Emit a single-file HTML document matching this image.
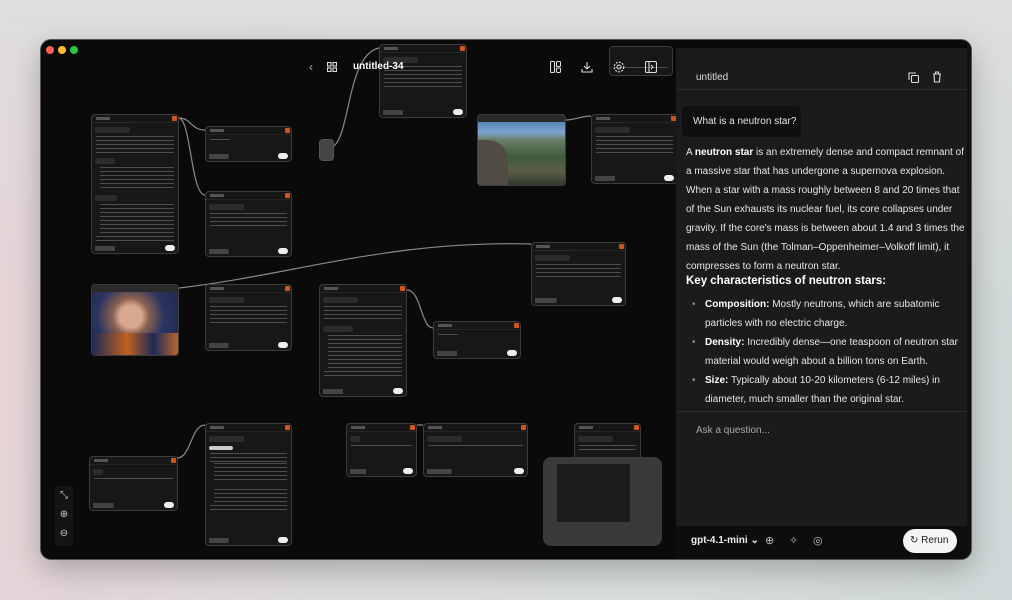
<!DOCTYPE html>
<html><head><meta charset="utf-8"><style>
*{box-sizing:border-box;margin:0;padding:0}
body{width:1012px;height:600px;overflow:hidden;font-family:"Liberation Sans",sans-serif;background:linear-gradient(100deg,#e8d2d6 0%,#dcdcdc 40%,#d8dcdc 70%,#cfd8d8 100%);position:relative}
.bgtop{position:absolute;left:0;top:0;width:1012px;height:300px;background:linear-gradient(#dedede,rgba(222,222,222,0))}
.win{position:absolute;left:40px;top:39px;width:932px;height:521px;border-radius:11px;background:#0a0a0a;overflow:hidden;box-shadow:0 10px 30px rgba(0,0,0,.25);border:1px solid #555}
.dot{position:absolute;top:6px;width:8px;height:8px;border-radius:50%}
.n{position:absolute;background:#171717;border:1px solid #3c3c3c;border-radius:4px;overflow:hidden}
.n .h{height:8px;border-bottom:1px solid #262626;position:relative}
.n .h:after{content:"";position:absolute;right:1px;top:1px;width:5px;height:5px;background:#d2551c;border-radius:1px}
.n .h:before{content:"";position:absolute;left:4px;top:2px;width:14px;height:3px;background:#555}
.q{margin:4px 3px 3px;height:6px;width:35px;background:#2c2c2c;border-radius:2px}
.t{margin:0 4px;background:repeating-linear-gradient(#7a7a7a 0 1px,transparent 1px 4px);opacity:.55}
.f{position:absolute;left:3px;right:3px;bottom:2px;height:5px;background:linear-gradient(90deg,#444 0 25%,transparent 25%)}
.f:after{content:"";position:absolute;right:0;top:-1px;width:10px;height:6px;background:#eee;border-radius:3px}
.img{position:absolute;border-radius:4px;overflow:hidden;border:1px solid #3c3c3c}
.panel{position:absolute;left:635px;top:8px;width:291px;height:478px;background:#1b1b1d}
.txt{position:absolute;left:10px;color:#e6e6e6;font-size:10px;line-height:19px;white-space:nowrap;letter-spacing:0}
b{color:#fff}
.ic{position:absolute}
</style></head><body>
<div class="bgtop"></div>
<div class="win">
 <div class="dot" style="left:5px;background:#fe5f57"></div>
 <div class="dot" style="left:17px;background:#febc2e"></div>
 <div class="dot" style="left:29px;background:#28c840"></div>

 <svg style="position:absolute;left:0;top:0" width="640" height="521" fill="none" stroke="#8a8a8a" stroke-width="1.2">
  <path d="M138 78 C150 78,150 90,164 90"/>
  <path d="M138 78 C150 80,150 155,164 155"/>
  <path d="M290 108 C310 100,305 15,338 8"/>
  <path d="M524 80 C535 80,540 76,550 76"/>
  <path d="M138 248 C250 235,350 200,490 204"/>
  <path d="M366 250 C380 250,380 288,392 288"/>
  <path d="M136 418 C150 418,150 385,164 385"/>
  <path d="M376 385 L382 385"/>
 </svg>

 <div class="n" style="left:50px;top:74px;width:88px;height:140px"><div class="h"></div><div class="q"></div><div class="t" style="height:18px"></div><div class="q" style="width:20px"></div><div class="t" style="height:24px;margin-left:8px"></div><div class="q" style="width:22px"></div><div class="t" style="height:32px;margin-left:8px"></div><div class="t" style="height:8px"></div><div class="f"></div></div>
 <div class="n" style="left:164px;top:86px;width:87px;height:36px"><div class="h"></div><div class="t" style="height:2px;width:20px;margin-top:4px"></div><div class="f"></div></div>
 <div class="n" style="left:164px;top:151px;width:87px;height:66px"><div class="h"></div><div class="q"></div><div class="t" style="height:16px"></div><div class="f"></div></div>
 <div class="n" style="left:338px;top:4px;width:88px;height:74px"><div class="h"></div><div class="q"></div><div class="t" style="height:22px"></div><div class="f"></div></div>
 <div class="img" style="left:436px;top:74px;width:89px;height:72px;background:linear-gradient(#3f6fa6 0%,#7fa6cf 25%,#6b7f6a 35%,#3e5a3a 60%,#5c5e48 80%,#2e3a28 100%)"><div style="position:absolute;left:0;top:0;right:0;height:7px;background:#2a2a2a"></div><div style="position:absolute;left:0;bottom:0;width:30px;height:45px;background:#504c44;border-radius:0 20px 0 0"></div></div>
 <div class="n" style="left:550px;top:74px;width:87px;height:70px"><div class="h"></div><div class="q"></div><div class="t" style="height:18px"></div><div class="f"></div></div>
 <div class="n" style="left:278px;top:99px;width:15px;height:22px;background:#444;border-color:#555"></div>
 <div class="n" style="left:568px;top:6px;width:64px;height:30px"><div class="t" style="height:4px;margin-top:20px"></div></div>
 <div class="img" style="left:50px;top:244px;width:88px;height:72px;background:radial-gradient(circle at 45% 45%,#d8a890 0 18%,#8a6050 30%,#2a3560 55%,#1e2545 100%)"><div style="position:absolute;left:0;top:0;right:0;height:7px;background:#2a2a2a"></div><div style="position:absolute;left:0;bottom:0;width:88px;height:22px;background:linear-gradient(90deg,#1e2a58,#c06020 40%,#1e2a58 70%,#c8682a)"></div></div>
 <div class="n" style="left:164px;top:244px;width:87px;height:67px"><div class="h"></div><div class="q"></div><div class="t" style="height:18px"></div><div class="f"></div></div>
 <div class="n" style="left:278px;top:244px;width:88px;height:113px"><div class="h"></div><div class="q"></div><div class="t" style="height:16px"></div><div class="q" style="width:30px"></div><div class="t" style="height:36px;margin-left:8px"></div><div class="t" style="height:6px"></div><div class="f"></div></div>
 <div class="n" style="left:392px;top:281px;width:88px;height:38px"><div class="h"></div><div class="t" style="height:2px;width:20px;margin-top:4px"></div><div class="f"></div></div>
 <div class="n" style="left:490px;top:202px;width:95px;height:64px"><div class="h"></div><div class="q"></div><div class="t" style="height:14px"></div><div class="f"></div></div>
 <div class="n" style="left:48px;top:416px;width:89px;height:55px"><div class="h"></div><div class="q" style="width:10px"></div><div class="t" style="height:3px"></div><div class="f"></div></div>
 <div class="n" style="left:164px;top:383px;width:87px;height:123px"><div class="h"></div><div class="q"></div><div class="q" style="width:24px;background:#ccc;height:4px"></div><div class="t" style="height:10px"></div><div class="t" style="height:20px;margin-left:8px"></div><div class="t" style="height:16px;margin-left:8px;margin-top:6px"></div><div class="t" style="height:8px"></div><div class="f"></div></div>
 <div class="n" style="left:305px;top:383px;width:71px;height:54px"><div class="h"></div><div class="q" style="width:10px"></div><div class="t" style="height:2px"></div><div class="f"></div></div>
 <div class="n" style="left:382px;top:383px;width:105px;height:54px"><div class="h"></div><div class="q"></div><div class="t" style="height:2px"></div><div class="f"></div></div>
 <div class="n" style="left:533px;top:383px;width:67px;height:50px"><div class="h"></div><div class="q"></div><div class="t" style="height:6px"></div></div>

 <div style="position:absolute;left:502px;top:417px;width:119px;height:89px;background:#3a3a3a;border-radius:8px;overflow:hidden">
  <div style="position:absolute;left:14px;top:7px;width:73px;height:58px;background:#1c1c1c"></div>
 </div>

 <div style="position:absolute;left:14px;top:446px;width:18px;height:60px;background:#141414;border-radius:5px;color:#ccc;font-size:10px;text-align:center;line-height:19px">⤡<br>⊕<br>⊖</div>

 <div style="position:absolute;left:268px;top:20px;color:#aaa;font-size:12px">‹</div>
 <svg class="ic" style="left:286px;top:22px" width="10" height="10" fill="none" stroke="#ddd" stroke-width="1.1"><rect x=".5" y=".5" width="3.5" height="3.5"/><rect x="6" y=".5" width="3.5" height="3.5"/><rect x=".5" y="6" width="3.5" height="3.5"/><rect x="6" y="6" width="3.5" height="3.5"/></svg>
 <div style="position:absolute;left:312px;top:21px;color:#fff;font-size:10px;font-weight:bold">untitled-34</div>
 <svg class="ic" style="left:509px;top:21px" width="11" height="12" fill="none" stroke="#ddd" stroke-width="1.1"><rect x=".5" y=".5" width="4" height="11" rx="1"/><rect x="6.5" y=".5" width="4" height="5" rx="1"/><rect x="6.5" y="7" width="4" height="4.5" rx="1"/></svg>
 <svg class="ic" style="left:540px;top:21px" width="12" height="12" fill="none" stroke="#ddd" stroke-width="1.1"><path d="M6 1v7M3 5l3 3 3-3M1 8v3h10V8"/></svg>
 <svg class="ic" style="left:572px;top:21px" width="12" height="12" fill="none" stroke="#ddd" stroke-width="1.1"><circle cx="6" cy="6" r="2"/><circle cx="6" cy="6" r="4.8" stroke-dasharray="2 1.2"/></svg>
 <svg class="ic" style="left:604px;top:21px" width="12" height="12" fill="none" stroke="#ddd" stroke-width="1.1"><rect x=".5" y=".5" width="11" height="11" rx="1.5"/><path d="M4 1v10M6 4l2 2-2 2"/></svg>

 <div class="panel">
  <div style="position:absolute;left:20px;top:24px;color:#ddd;font-size:10px">untitled</div>
  <svg class="ic" style="left:232px;top:24px" width="11" height="11" fill="none" stroke="#ddd" stroke-width="1.1"><rect x="3.5" y="3.5" width="7" height="7" rx="1"/><path d="M1 8V1h7"/></svg>
  <svg class="ic" style="left:256px;top:23px" width="10" height="12" fill="none" stroke="#ddd" stroke-width="1.1"><path d="M1 3h8M3.5 3V1h3v2M2 3l.5 8h5L8 3"/></svg>
  <div style="position:absolute;left:0;right:0;top:41px;height:1px;background:#2e2e30"></div>
  <div style="position:absolute;left:6px;top:58px;width:119px;height:31px;background:#0f0f10;border-radius:5px;color:#e6e6e6;font-size:10px;line-height:31px;padding-left:11px;white-space:nowrap">What is a neutron star?</div>
  <div class="txt" style="top:95px">A <b>neutron star</b> is an extremely dense and compact remnant of<br>a massive star that has undergone a supernova explosion.<br>When a star with a mass roughly between 8 and 20 times that<br>of the Sun exhausts its nuclear fuel, its core collapses under<br>gravity. If the core's mass is between about 1.4 and 3 times the<br>mass of the Sun (the Tolman–Oppenheimer–Volkoff limit), it<br>compresses to form a neutron star.</div>
  <div class="txt" style="top:224px;font-size:11.5px;font-weight:bold;color:#fff">Key characteristics of neutron stars:</div>
  <div class="txt" style="top:247px;left:16px;color:#888">•<br><br>•<br><br>•</div>
  <div class="txt" style="top:247px;left:29px"><b>Composition:</b> Mostly neutrons, which are subatomic<br>particles with no electric charge.</div>
  <div class="txt" style="top:285px;left:29px"><b>Density:</b> Incredibly dense—one teaspoon of neutron star<br>material would weigh about a billion tons on Earth.</div>
  <div class="txt" style="top:323px;left:29px"><b>Size:</b> Typically about 10-20 kilometers (6-12 miles) in<br>diameter, much smaller than the original star.</div>
  <div style="position:absolute;left:0;right:0;top:363px;height:1px;background:#2e2e30"></div>
  <div style="position:absolute;left:20px;top:377px;color:#aaa;font-size:10px">Ask a question...</div>
 </div>
 <div style="position:absolute;left:635px;top:486px;width:291px;height:35px;background:#0d0d0d"></div>
 <div style="position:absolute;left:650px;top:495px;color:#eee;font-size:10px;font-weight:bold">gpt-4.1-mini ⌄</div>
 <div style="position:absolute;left:724px;top:494px;color:#bbb;font-size:11px">⊕</div>
 <div style="position:absolute;left:748px;top:494px;color:#bbb;font-size:11px">✧</div>
 <div style="position:absolute;left:772px;top:494px;color:#bbb;font-size:11px">◎</div>
 <div style="position:absolute;left:862px;top:489px;width:54px;height:24px;background:#f4f4f4;border-radius:12px;color:#222;font-size:10px;line-height:24px;padding-left:7px;white-space:nowrap">↻ Rerun</div>
 <div style="position:absolute;left:926px;top:0;width:6px;height:521px;background:#111"></div>
</div>
</body></html>
